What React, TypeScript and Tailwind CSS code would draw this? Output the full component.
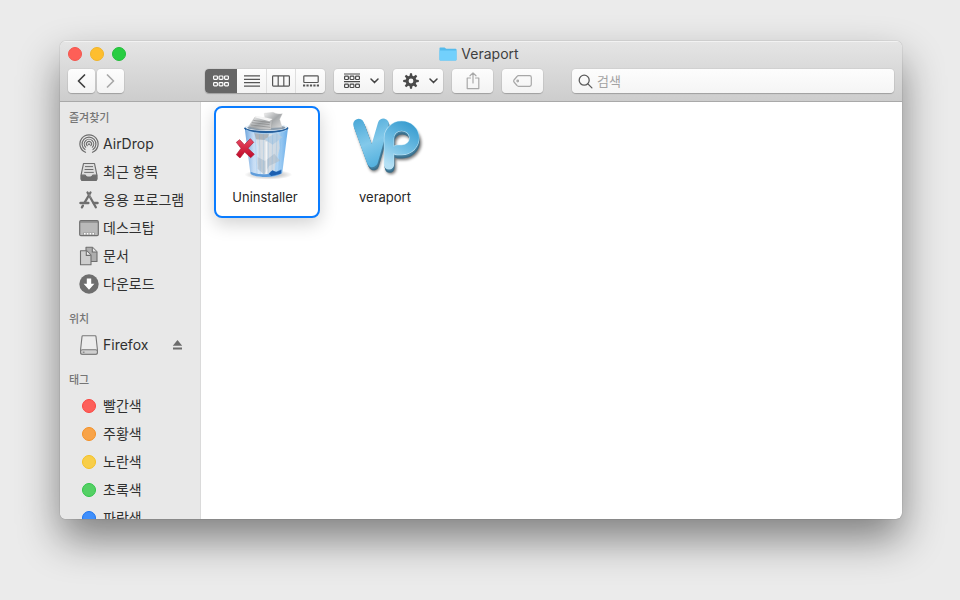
import type { ReactNode } from "react";

const KO = "font-['Inter','Noto_Sans_CJK_KR',sans-serif]";

function TrafficLights() {
  return (
    <div className="flex gap-2">
      <button type="button" aria-label="닫기" className="size-3.5 rounded-full border border-[#f2564e] bg-[#fe5f57]" />
      <button type="button" aria-label="최소화" className="size-3.5 rounded-full border border-[#f0b429] bg-[#febe2e]" />
      <button type="button" aria-label="확대" className="size-3.5 rounded-full border border-[#22bd3a] bg-[#28cd41]" />
    </div>
  );
}

function FolderIcon() {
  return (
    <svg width="18" height="14" viewBox="0 0 18 14" aria-hidden="true">
      <path d="M.5 1.2Q.5.4 1.300.4H5.600L7.200 1.700H16.700Q17.500 1.700 17.500 2.500V12.800Q17.500 13.600 16.700 13.600H1.300Q.5 13.600.5 12.800Z" fill="#55bbec" />
      <path d="M.5 3.500H17.500V12.600Q17.500 13.400 16.700 13.400H1.300Q.5 13.400.5 12.600Z" fill="#72d0fc" />
    </svg>
  );
}

function ToolButton({ label, className, children }: { label: string; className: string; children: ReactNode }) {
  return (
    <button
      type="button"
      aria-label={label}
      className={`flex h-6 items-center justify-center rounded-[4px] bg-linear-to-b from-[#fdfdfd] to-[#f3f3f3] shadow-[0_0_0_1px_rgba(0,0,0,0.04),0_1px_1px_rgba(0,0,0,0.2)] ${className}`}
    >
      {children}
    </button>
  );
}

function Squares({ y }: { y: number }) {
  return (
    <>
      <rect x="0.6" y={y} width="3.8" height="3.3" rx="0.8" />
      <rect x="6.1" y={y} width="3.8" height="3.3" rx="0.8" />
      <rect x="11.6" y={y} width="3.8" height="3.3" rx="0.8" />
    </>
  );
}

function ChevronDown() {
  return (
    <svg width="9" height="6" viewBox="0 0 9 6" fill="none" stroke="#444" strokeWidth="1.5" strokeLinecap="round" strokeLinejoin="round" aria-hidden="true">
      <path d="M1 1L4.500 4.600L8 1" />
    </svg>
  );
}

function GearIcon() {
  const teeth = [0, 45, 90, 135, 180, 225, 270, 315];
  return (
    <svg width="16" height="16" viewBox="0 0 16 16" aria-hidden="true">
      {teeth.map((a) => (
        <path key={a} d="M6.500 3.500L7 .2H9L9.500 3.500Z" fill="#4a4a4a" transform={`rotate(${a} 8 8)`} />
      ))}
      <circle cx="8" cy="8" r="3.900" fill="none" stroke="#4a4a4a" strokeWidth="3" />
    </svg>
  );
}

function Toolbar() {
  return (
    <div className="flex items-center">
      <div className="flex gap-0.5">
        <ToolButton label="뒤로" className="w-[27px]">
          <svg width="9" height="14" viewBox="0 0 9 14" fill="none" stroke="#3f3f3f" strokeWidth="1.700" strokeLinecap="round" strokeLinejoin="round">
            <path d="M7.500 1L1.500 7L7.500 13" />
          </svg>
        </ToolButton>
        <ToolButton label="앞으로" className="w-[27px]">
          <svg width="9" height="14" viewBox="0 0 9 14" fill="none" stroke="#a9a9a9" strokeWidth="1.700" strokeLinecap="round" strokeLinejoin="round">
            <path d="M1.500 1L7.500 7L1.500 13" />
          </svg>
        </ToolButton>
      </div>

      <div role="group" aria-label="보기" className="ml-[81px] flex h-6 overflow-hidden rounded-[4px] bg-linear-to-b from-[#fdfdfd] to-[#f3f3f3] shadow-[0_0_0_1px_rgba(0,0,0,0.04),0_1px_1px_rgba(0,0,0,0.2)]">
        <button type="button" aria-label="아이콘" aria-pressed="true" className="flex w-8 items-center justify-center bg-[#666]">
          <svg width="16" height="12" viewBox="0 0 16 12" fill="none" stroke="#fff" strokeWidth="1.200">
            <Squares y={1} />
            <Squares y={7.6} />
          </svg>
        </button>
        <button type="button" aria-label="목록" className="flex w-[30px] items-center justify-center border-r border-[#dedede]">
          <svg width="16" height="12" viewBox="0 0 16 12" fill="none" stroke="#555" strokeWidth="1.200">
            <path d="M0 .9H16M0 4.300H16M0 7.700H16M0 11.100H16" />
          </svg>
        </button>
        <button type="button" aria-label="계층" className="flex w-[29px] items-center justify-center border-r border-[#dedede]">
          <svg width="18" height="12" viewBox="0 0 18 12" fill="none" stroke="#555" strokeWidth="1.200">
            <rect x=".6" y=".9" width="16.800" height="10.200" rx=".8" />
            <path d="M6.200 1V11M11.800 1V11" />
          </svg>
        </button>
        <button type="button" aria-label="갤러리" className="flex w-[29px] items-center justify-center">
          <svg width="16" height="12" viewBox="0 0 16 12" fill="none" stroke="#555" strokeWidth="1.200">
            <rect x=".8" y=".8" width="14.400" height="6.700" rx=".8" />
            <path d="M0 10.500H16" strokeWidth="2.200" strokeDasharray="2.200 1.250" />
          </svg>
        </button>
      </div>

      <ToolButton label="정렬" className="ml-[9px] w-[50px] gap-2.5">
        <svg width="16" height="16" viewBox="0 0 16 16" fill="none" stroke="#4a4a4a" strokeWidth="1.200" className="ml-1">
          <path d="M0 1H16M0 8.700H16" />
          <Squares y={3.2} />
          <Squares y={11.2} />
        </svg>
        <ChevronDown />
      </ToolButton>
      <ToolButton label="동작" className="ml-[9px] w-[50px] gap-2.5">
        <span className="ml-1"><GearIcon /></span>
        <ChevronDown />
      </ToolButton>
      <ToolButton label="공유" className="ml-[9px] w-[41px]">
        <svg width="14" height="18" viewBox="0 0 14 18" fill="none" stroke="#a8a8a8" strokeWidth="1.200" strokeLinecap="round" strokeLinejoin="round">
          <path d="M4.500 6H1.200V16.600H12.800V6H9.500M7 11V1M4 3.800L7 .9L10 3.800" />
        </svg>
      </ToolButton>
      <ToolButton label="태그" className="ml-[9px] w-[41px]">
        <svg width="19" height="12" viewBox="0 0 19 12" fill="none" stroke="#a8a8a8" strokeWidth="1.200" strokeLinejoin="round">
          <path d="M5.500.7H16.600Q18.300.7 18.300 2.400V9.600Q18.300 11.300 16.600 11.300H5.500Q4.600 11.300 4 10.500L1 7Q.3 6 1 5L4 1.500Q4.600.7 5.500.7Z" />
          <circle cx="4.700" cy="6" r=".8" />
        </svg>
      </ToolButton>

      <label className="ml-[29px] flex h-6 flex-1 items-center gap-1 rounded-[4px] bg-linear-to-b from-[#fdfdfd] to-[#f5f5f5] pl-1.5 shadow-[0_0_0_1px_rgba(0,0,0,0.04),0_1px_1px_rgba(0,0,0,0.2)]">
        <svg width="15" height="15" viewBox="0 0 15 15" fill="none" stroke="#5c5c5c" strokeWidth="1.300" strokeLinecap="round" aria-hidden="true">
          <circle cx="6.200" cy="6.200" r="5" />
          <path d="M9.900 9.900L13.900 13.900" />
        </svg>
        <input type="search" aria-label="검색" placeholder="검색" className="min-w-0 flex-1 bg-transparent text-[13px] leading-5 outline-none placeholder:text-[#a3a3a3]" />
      </label>
    </div>
  );
}

const AirDropIcon = (
  <svg width="20" height="20" viewBox="0 0 20 20" fill="none" stroke="#6e6e6e" strokeWidth="1.200" strokeLinecap="round">
    <path d="M6.500 18.300A9.100 9.100 0 1 1 13.500 18.300" />
    <path d="M6 15.600A6.900 6.900 0 1 1 14 15.600" />
    <path d="M6.600 13.200A4.700 4.700 0 1 1 13.400 13.200" />
    <path d="M8.200 11.700A2.500 2.500 0 1 1 11.800 11.700" />
    <circle cx="10" cy="10.200" r="1" fill="#6e6e6e" stroke="none" />
  </svg>
);

const RecentsIcon = (
  <svg width="20" height="20" viewBox="0 0 20 20" fill="none" stroke="#6e6e6e" strokeWidth="1.200" strokeLinejoin="round">
    <path d="M4.500 1.500H15.500L17.800 12.500V17Q17.800 18.500 16.300 18.500H3.700Q2.200 18.500 2.200 17V12.500Z" fill="#dedede" />
    <path d="M2.200 13.200H6.200Q7 15 8.500 15H11.500Q13 15 13.800 13.200H17.800V17Q17.800 18.500 16.300 18.500H3.700Q2.200 18.500 2.200 17Z" fill="#6e6e6e" />
    <path d="M6 4.600H14M5.600 7.500H14.400M5.200 10.400H14.800" strokeWidth="1" />
  </svg>
);

const AppsIcon = (
  <svg width="20" height="20" viewBox="0 0 20 20" fill="none" stroke="#6e6e6e" strokeWidth="2.300" strokeLinecap="round">
    <path d="M8.500 2.500L16.800 17.300M11.500 2.500L5.600 12.600M3.900 15.600L2.900 17.400" />
    <path d="M1.500 13H9.300M14.800 13H18.500" strokeWidth="2.500" />
    <path d="M10 4.300L12 8" stroke="#a2a2a2" strokeWidth=".6" />
  </svg>
);

const DesktopIcon = (
  <svg width="20" height="20" viewBox="0 0 20 20">
    <rect x=".7" y="2.700" width="18.600" height="15" rx="1.200" fill="#b9b9b9" stroke="#6e6e6e" strokeWidth="1.200" />
    <path d="M1 4H19" stroke="#777" strokeWidth="1" />
    <path d="M4 17V14.500H16V17" fill="#a0a0a0" />
    <path d="M5 15.800H15.200" stroke="#fff" strokeWidth="1.400" strokeDasharray="1.600 1.200" />
  </svg>
);

const DocsIcon = (
  <svg width="20" height="20" viewBox="0 0 20 20" stroke="#6e6e6e" strokeWidth="1.100" strokeLinejoin="round">
    <path d="M7 1.300H13.500L18 5.800V15.500H7Z" fill="#adadad" />
    <path d="M13.300 1.500V6H17.800" fill="#e8e8e8" />
    <path d="M1.500 4.700H7.500L12 9.200V18.700H1.500Z" fill="#cecece" />
    <path d="M7.300 4.900V9.400H11.800" fill="#efefef" />
  </svg>
);

const DownloadIcon = (
  <svg width="20" height="20" viewBox="0 0 20 20">
    <circle cx="10" cy="10" r="9.700" fill="#6e6e6e" />
    <path d="M7.800 4.500H12.200V9.800H15.400L10 15.800L4.600 9.800H7.800Z" fill="#fff" />
  </svg>
);

const DriveIcon = (
  <svg width="20" height="20" viewBox="0 0 20 20" fill="none" stroke="#777" strokeWidth="1.100" strokeLinejoin="round">
    <path d="M3.800 .800H16.200Q16.900.8 17 1.600L18.400 14.500V17.500Q18.400 19.300 16.600 19.300H3.400Q1.600 19.300 1.600 17.500V14.500L3 1.600Q3.100.8 3.800.8Z" fill="#ececec" />
    <path d="M1.600 16Q1.800 14.700 3.400 14.700H16.600Q18.200 14.700 18.400 16V17.500Q18.400 19.300 16.600 19.300H3.400Q1.600 19.300 1.600 17.500Z" fill="#cfcfcf" />
    <path d="M3.800 17.200H5.500" />
  </svg>
);

function Section({ title, children }: { title: string; children: ReactNode }) {
  return (
    <section className="shrink-0">
      <h2 className="flex h-[25px] items-center pl-[9px] text-[11px] leading-4 font-medium text-[#757575]">{title}</h2>
      <ul>{children}</ul>
    </section>
  );
}

function Item({ icon, label, trailing }: { icon: ReactNode; label: string; trailing?: ReactNode }) {
  return (
    <li className="flex h-7 items-center pr-[17px] pl-[19px]">
      <button type="button" className="flex flex-1 items-center gap-1 text-left text-[14px] leading-5 whitespace-nowrap text-[#303030]">
        <span className="flex w-5 shrink-0 justify-center">{icon}</span>
        {label}
      </button>
      {trailing}
    </li>
  );
}

const tags = [
  { label: "빨간색", dot: "border-[#fb4540] bg-[#fd5f5a]" },
  { label: "주황색", dot: "border-[#f49025] bg-[#f8a348]" },
  { label: "노란색", dot: "border-[#f5c022] bg-[#f8ce49]" },
  { label: "초록색", dot: "border-[#2fc548] bg-[#54d064]" },
  { label: "파란색", dot: "border-[#1d74ee] bg-[#3f8ffb]" },
];

function Sidebar() {
  return (
    <nav aria-label="사이드바" className="flex w-[141px] shrink-0 flex-col gap-2 overflow-hidden border-r border-[#dadada] bg-[#e8e8e8] pt-[3px]">
      <Section title="즐겨찾기">
        <Item icon={AirDropIcon} label="AirDrop" />
        <Item icon={RecentsIcon} label="최근 항목" />
        <Item icon={AppsIcon} label="응용 프로그램" />
        <Item icon={DesktopIcon} label="데스크탑" />
        <Item icon={DocsIcon} label="문서" />
        <Item icon={DownloadIcon} label="다운로드" />
      </Section>
      <Section title="위치">
        <Item
          icon={DriveIcon}
          label="Firefox"
          trailing={
            <button type="button" aria-label="추출">
              <svg width="11" height="10" viewBox="0 0 11 10" fill="#6c6c6c">
                <path d="M5.500 0L10.200 5.800H.8ZM1 7.500H10V9.500H1Z" />
              </svg>
            </button>
          }
        />
      </Section>
      <Section title="태그">
        {tags.map((t) => (
          <Item key={t.label} icon={<span className={`size-3.5 rounded-full border ${t.dot}`} />} label={t.label} />
        ))}
      </Section>
    </nav>
  );
}

function TrashIcon() {
  return (
    <svg width="72" height="72" viewBox="72 27 216 216" aria-hidden="true">
      <defs>
        <linearGradient id="glass" x1="0" x2="1">
          <stop offset="0" stopColor="#6fa6de" />
          <stop offset=".2" stopColor="#c5dcf4" />
          <stop offset=".5" stopColor="#edf5fc" />
          <stop offset=".78" stopColor="#a9d2f5" />
          <stop offset="1" stopColor="#68ade9" />
        </linearGradient>
        <linearGradient id="paper" x1="0" y1="0" x2="1" y2="1">
          <stop offset="0" stopColor="#f2f2f2" />
          <stop offset=".5" stopColor="#a5a8aa" />
          <stop offset="1" stopColor="#dcdcdc" />
        </linearGradient>
        <linearGradient id="redX" x1="0" y1="0" x2="0" y2="1">
          <stop offset="0" stopColor="#e84a63" />
          <stop offset="1" stopColor="#c00828" />
        </linearGradient>
        <radialGradient id="floor">
          <stop offset="0" stopColor="#000" stopOpacity=".4" />
          <stop offset="1" stopColor="#000" stopOpacity="0" />
        </radialGradient>
      </defs>
      <ellipse cx="190" cy="224" rx="72" ry="15" fill="url(#floor)" />
      <path d="M119 84L136 219Q142 232 184 232Q224 232 232 217L249 84Z" fill="url(#glass)" />
      <path d="M146 92L219 94L224 145L205 219L181 226L157 190L160 140Z" fill="#d5dadf" opacity=".8" />
      <path d="M147 96L192 100L187 121L153 118Z" fill="#aeb4ba" />
      <path d="M178 118L214 98L232 112L203 134Z" fill="#b5cde2" />
      <path d="M158 171L180 183L208 161L225 182L192 198L177 224L158 206Z" fill="#b5c3d0" opacity=".8" />
      <path d="M184 125V222" stroke="#fff" strokeWidth="5" opacity=".7" />
      <path d="M150 96L156 221M163 96L166 224M175 96L176 224M190 96V224M203 96L201 224M216 96L212 222M229 94L221 219" stroke="#6caadd" strokeWidth="1.500" opacity=".45" />
      <path d="M137 215Q160 226 190 222L198 213L211 216L229 208L231 220Q214 231 184 231Q151 231 137 222Z" fill="#5f9ddb" />
      <path d="M192 222L202 211L214 216L229 210L227 221L199 228Z" fill="#1c5fb0" />
      <ellipse cx="184" cy="85" rx="66" ry="13" fill="#28639f" />
      <ellipse cx="184" cy="82" rx="64" ry="11" fill="#eaf3fb" />
      <ellipse cx="184" cy="83" rx="57" ry="8" fill="#8c9cab" />
      <path d="M178 40L204 37Q216 45 232 41L224 58L231 82L188 84L181 64Z" fill="url(#paper)" stroke="#c9c9c9" strokeWidth="1" />
      <path d="M134 75L150 51L202 58L198 88Q166 91 134 80Z" fill="url(#paper)" stroke="#999" strokeWidth="1" />
      <path d="M148 52L158 48L203 57L193 64Z" fill="#f5f5f5" />
      <path d="M141 68L194 74M138 75L196 82M145 61L195 68" stroke="#777" strokeWidth="2" opacity=".75" />
      <path d="M119 84Q128 96 184 97Q240 96 249 83" fill="none" stroke="#245f9e" strokeWidth="4" />
      <path d="M123 90Q145 101 184 101Q225 101 245 90" fill="none" stroke="#a9d3f5" strokeWidth="2.500" />
      <path d="M94 127L104 119L118 134L136 116L146 127L129 145L148 163L137 173L119 156L105 174L94 164L108 145Z" fill="url(#redX)" stroke="#a71c35" strokeWidth="2" strokeLinejoin="round" />
    </svg>
  );
}

function VeraportIcon() {
  const v = "M57 58L98 170L131 57";
  const p = "M148 178V100A38 36 0 1 1 186 135H172";
  return (
    <svg width="72" height="72" viewBox="28 12 216 216" fill="none" strokeLinecap="round" strokeLinejoin="round" aria-hidden="true" className="overflow-visible">
      <defs>
        <linearGradient id="vFace" gradientUnits="userSpaceOnUse" x1="50" y1="45" x2="110" y2="190">
          <stop offset="0" stopColor="#4ca9d8" />
          <stop offset=".5" stopColor="#83c9ea" />
          <stop offset="1" stopColor="#4eaedd" />
        </linearGradient>
        <linearGradient id="pFace" gradientUnits="userSpaceOnUse" x1="150" y1="180" x2="220" y2="60">
          <stop offset="0" stopColor="#b4e0f5" />
          <stop offset=".45" stopColor="#74c0e5" />
          <stop offset="1" stopColor="#3a9dd0" />
        </linearGradient>
        <filter id="drop" x="-20%" y="-20%" width="150%" height="150%">
          <feGaussianBlur stdDeviation="4" />
        </filter>
      </defs>
      <g stroke="#000" strokeWidth="30" opacity=".55" filter="url(#drop)" transform="translate(6 15)">
        <path d={v} />
        <path d={p} />
      </g>
      <g stroke="#3c6f8b">
        <path d={v} strokeWidth="32" transform="translate(4 10)" />
        <path d={p} strokeWidth="29" transform="translate(2 11)" />
      </g>
      <g stroke="#427f9f">
        <path d={v} strokeWidth="32" transform="translate(2 5)" />
        <path d={p} strokeWidth="29" transform="translate(1 6)" />
      </g>
      <path d={v} stroke="url(#vFace)" strokeWidth="33" />
      <path d={p} stroke="#c4e6f5" strokeWidth="31" />
      <path d={p} stroke="url(#pFace)" strokeWidth="28" />
    </svg>
  );
}

function FileTile({ name, selected, children }: { name: string; selected?: boolean; children: ReactNode }) {
  return (
    <button
      type="button"
      className={`flex h-28 w-[106px] flex-col items-center rounded-lg border-2 pt-px ${
        selected ? "border-[#0a7cff] bg-white pr-1 shadow-[0_6px_18px_rgba(0,0,0,0.18)]" : "border-transparent"
      }`}
    >
      {children}
      <span className="mt-1.5 text-[13px] leading-5 text-[#262626]">{name}</span>
    </button>
  );
}

export default function App() {
  return (
    <main className={`flex h-screen overflow-hidden bg-[#ebebeb] pt-[41px] pr-[58px] pb-[81px] pl-[60px] ${KO}`}>
      <div className="flex min-w-0 flex-1 flex-col overflow-hidden rounded-md bg-white shadow-[0_0_1px_rgba(0,0,0,0.5),0_20px_42px_rgba(0,0,0,0.46)]">
        <header className="shrink-0 border-b border-[#a9a9a9] bg-linear-to-b from-[#e5e5e5] to-[#cdcdcd] px-2 pb-2 shadow-[inset_0_1px_0_#f2f2f2]">
          <div className="grid h-[26px] grid-cols-[1fr_auto_1fr] items-center">
            <TrafficLights />
            <h1 className="flex items-center gap-1 pr-1 text-[14px] leading-5 text-[#3f3f3f]">
              <FolderIcon />
              Veraport
            </h1>
          </div>
          <div className="pt-0.5">
            <Toolbar />
          </div>
        </header>
        <div className="flex min-h-0 flex-1">
          <Sidebar />
          <section aria-label="Veraport" className="flex min-w-0 flex-1 items-start gap-3 overflow-hidden pt-1 pl-[13px]">
            <FileTile name="Uninstaller" selected>
              <TrashIcon />
            </FileTile>
            <FileTile name="veraport">
              <VeraportIcon />
            </FileTile>
          </section>
        </div>
      </div>
    </main>
  );
}
